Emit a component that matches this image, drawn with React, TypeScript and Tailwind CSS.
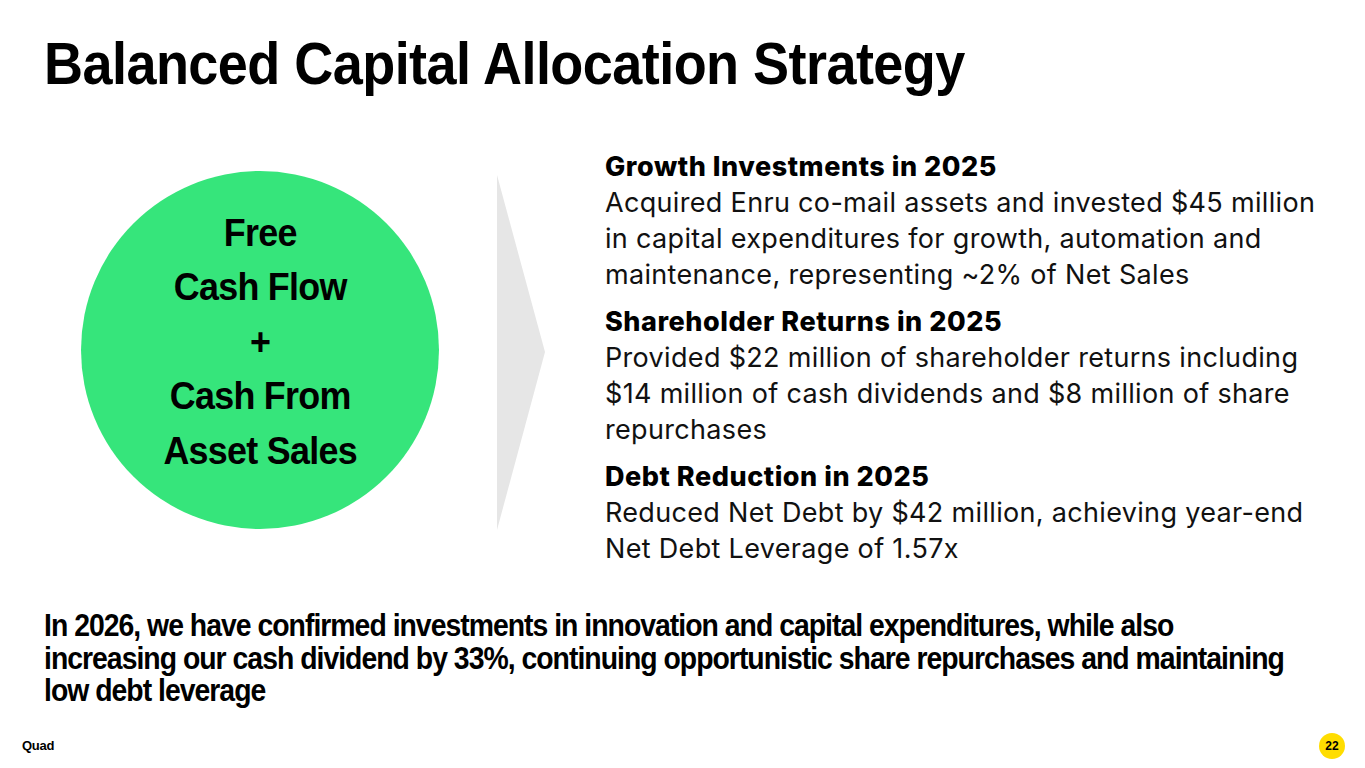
const condensed = "font-['Liberation_Sans',sans-serif] font-bold";

const blocks = [
  {
    title: "Growth Investments in 2025",
    lines: [
      "Acquired Enru co-mail assets and invested $45 million",
      "in capital expenditures for growth, automation and",
      "maintenance, representing ~2% of Net Sales",
    ],
  },
  {
    title: "Shareholder Returns in 2025",
    lines: [
      "Provided $22 million of shareholder returns including",
      "$14 million of cash dividends and $8 million of share",
      "repurchases",
    ],
  },
  {
    title: "Debt Reduction in 2025",
    lines: [
      "Reduced Net Debt by $42 million, achieving year-end",
      "Net Debt Leverage of 1.57x",
    ],
  },
];

const App = () => {
  return (
    <div className="w-[1365px] h-[768px] bg-white text-black overflow-hidden flex flex-col">
      <div className="pl-[44px] pt-[34px]">
        <h1 className={`${condensed} inline-block origin-left scale-x-[0.9] text-[60px] leading-[60px] tracking-[-0.01em] whitespace-nowrap`}>
          Balanced Capital Allocation Strategy
        </h1>
      </div>

      <div className="flex mt-[35px]">
        <div className="ml-[81px] mt-[42px] w-[358px] h-[358px] rounded-full bg-[#36e57b] flex flex-col items-center justify-center">
          <div className={`${condensed} mb-[16px] scale-x-[0.92] text-[39px] leading-[54.5px] tracking-[-0.02em] text-center`}>
            <div>Free</div>
            <div>Cash Flow</div>
            <div>+</div>
            <div>Cash From</div>
            <div>Asset Sales</div>
          </div>
        </div>

        <svg className="ml-[58px] mt-[46px]" width="48" height="355" viewBox="0 0 48 355">
          <polygon points="0,0 48,177 0,355" fill="#e6e6e6" />
        </svg>

        <div className="ml-[60px] mt-[20px] flex flex-col gap-[11px] font-['Inter',sans-serif] text-[#111]">
          {blocks.map((b) => (
            <div key={b.title}>
              <div className="text-[27px] leading-[36px] font-extrabold tracking-[0.02em] text-black">{b.title}</div>
              {b.lines.map((l) => (
                <div key={l} className="text-[27px] leading-[36px] tracking-[0.012em] whitespace-nowrap">
                  {l}
                </div>
              ))}
            </div>
          ))}
        </div>
      </div>

      <div className="pl-[44px] mt-[42px]">
        <p className={`${condensed} inline-block origin-left scale-x-[0.887] text-[32px] leading-[32.5px] tracking-[-0.035em] whitespace-nowrap`}>
          In 2026, we have confirmed investments in innovation and capital expenditures, while also
          <br />
          increasing our cash dividend by 33%, continuing opportunistic share repurchases and maintaining
          <br />
          low debt leverage
        </p>
      </div>

      <div className="mt-auto flex items-center justify-between pl-[22px] pr-[20px] pb-[9px]">
        <span className="font-['Liberation_Sans',sans-serif] font-bold text-[13px] tracking-[-0.02em]">Quad</span>
        <span className="w-[26px] h-[26px] rounded-full bg-[#ffdd00] flex items-center justify-center font-['Liberation_Sans',sans-serif] font-bold text-[12px]">
          22
        </span>
      </div>
    </div>
  );
};

export default App;
